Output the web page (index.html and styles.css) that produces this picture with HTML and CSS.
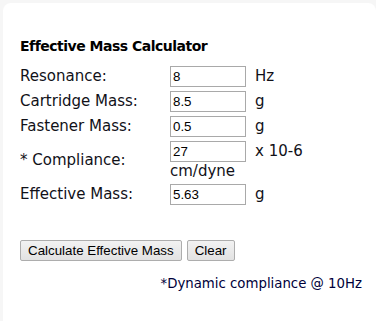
FILE: index.html
```html
<!DOCTYPE html>
<html>
<head>
<meta charset="utf-8">
<link rel="stylesheet" href="styles.css">
</head>
<body>
<div class="card">
  <h2 class="title">Effective Mass Calculator</h2>
  <div class="form">
    <div class="label">Resonance:</div>
    <div class="field"><input class="box" value="8"></div>
    <div class="unit">Hz</div>

    <div class="label">Cartridge Mass:</div>
    <div class="field"><input class="box" value="8.5"></div>
    <div class="unit">g</div>

    <div class="label">Fastener Mass:</div>
    <div class="field"><input class="box" value="0.5"></div>
    <div class="unit">g</div>

    <div class="label">* Compliance:</div>
    <div class="field"><input class="box" value="27"><div class="sub">cm/dyne</div></div>
    <div class="unit top">x 10-6</div>

    <div class="label">Effective Mass:</div>
    <div class="field"><input class="box" value="5.63"></div>
    <div class="unit">g</div>
  </div>
  <div class="buttons">
    <button class="btn">Calculate Effective Mass</button>
    <button class="btn">Clear</button>
  </div>
  <p class="note">*Dynamic compliance @ 10Hz</p>
</div>
</body>
</html>
```
FILE: styles.css
```css
html, body {
  margin: 0;
  padding: 0;
  background: #f6f6f6;
}
body {
  padding: 3px 0 0 3px;
  height: 321px;
  box-sizing: border-box;
  overflow: hidden;
}
.card {
  background: #fff;
  border-radius: 8px 8px 0 8px;
  padding: 35px 14px 40px 17px;
  font-family: "DejaVu Sans", Verdana, sans-serif;
  color: #111118;
  min-height: 330px;
  box-sizing: border-box;
}
.title {
  margin: 0;
  font-size: 14px;
  font-weight: bold;
  line-height: 17px;
  letter-spacing: -0.5px;
  color: #000;
}
.form {
  margin-top: 11px;
  display: grid;
  grid-template-columns: 150px 85px auto;
  row-gap: 4px;
  font-size: 15px;
  line-height: 17px;
}
.label {
  align-self: center;
}
.field {
  display: flex;
  flex-direction: column;
  align-items: flex-start;
}
.unit {
  align-self: center;
}
.unit.top {
  align-self: start;
  padding-top: 2px;
}
.sub {
  margin-top: 1px;
}
.box {
  width: 76px;
  height: 21px;
  box-sizing: border-box;
  margin: 0;
  padding: 1px 2px;
  border: 1px solid #a9a9a9;
  font-family: "Liberation Sans", Arial, sans-serif;
  font-size: 13.33px;
  color: #000;
  background: #fff;
}
.buttons {
  margin-top: 35px;
  display: flex;
  gap: 5px;
}
.btn {
  height: 21px;
  padding: 0 7px;
  margin: 0;
  border: 1px solid #adadad;
  border-radius: 2px;
  background: linear-gradient(#f2f2f2, #e2e2e2);
  font-family: "Liberation Sans", Arial, sans-serif;
  font-size: 13.33px;
  color: #000;
}
.note {
  margin: 15px 0 0;
  text-align: right;
  font-size: 13.3px;
  line-height: 15px;
  color: #00003a;
}
```
